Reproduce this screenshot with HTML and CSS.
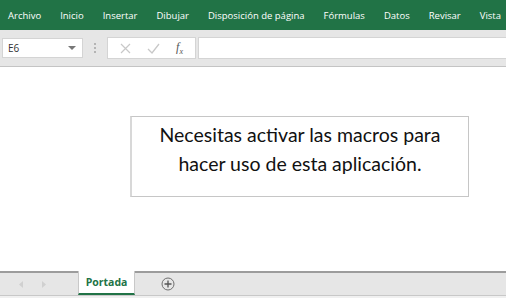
FILE: index.html
```html
<!DOCTYPE html>
<html lang="es">
<head>
  <meta charset="UTF-8">
  <title>Portada</title>
  <link rel="stylesheet" href="styles.css">
</head>
<body>
  <div class="ribbon">
    <span>Archivo</span>
    <span>Inicio</span>
    <span>Insertar</span>
    <span>Dibujar</span>
    <span>Disposición de página</span>
    <span>Fórmulas</span>
    <span>Datos</span>
    <span>Revisar</span>
    <span>Vista</span>
  </div>

  <div class="formula-bar">
    <div class="name-box">
      <span>E6</span>
      <svg width="8" height="5" viewBox="0 0 8 5"><path d="M0 0 L8 0 L4 4 Z" fill="#777"/></svg>
    </div>
    <div class="grip">
      <i></i><i></i><i></i>
    </div>
    <div class="fx-buttons">
      <svg width="11" height="11" viewBox="0 0 11 11"><path d="M1 1 L10 10 M10 1 L1 10" stroke="#c8c8c8" stroke-width="1.2"/></svg>
      <svg width="13" height="11" viewBox="0 0 13 11"><path d="M1 6 L5 10 L12 1" stroke="#c8c8c8" stroke-width="1.3" fill="none"/></svg>
      <span class="fx">f<sub>x</sub></span>
    </div>
    <div class="formula-input"></div>
  </div>

  <div class="sheet">
    <div class="notice">Necesitas activar las macros para hacer uso de esta aplicación.</div>
  </div>

  <div class="tabs">
    <div class="arrows">
      <svg width="5" height="7" viewBox="0 0 5 7"><path d="M4 0 L0 3.5 L4 7 Z" fill="#d0d0d0"/></svg>
      <svg width="5" height="7" viewBox="0 0 5 7"><path d="M1 0 L5 3.5 L1 7 Z" fill="#d0d0d0"/></svg>
    </div>
    <div class="tab active">Portada</div>
    <div class="add-sheet">
      <svg width="14" height="14" viewBox="0 0 14 14"><circle cx="7" cy="7" r="6" fill="none" stroke="#6f6f6f" stroke-width="1"/><path d="M7 3.5 V10.5 M3.5 7 H10.5" stroke="#555" stroke-width="1.3"/></svg>
    </div>
  </div>
  <div class="status"></div>
</body>
</html>
```

FILE: styles.css
```css
body {
  margin: 0;
  width: 506px;
  height: 298px;
  overflow: hidden;
  font-family: "Open Sans", "Liberation Sans", sans-serif;
  background-color: #fff;
  display: flex;
  flex-direction: column;
}
.ribbon {
  height: 30px;
  background-color: #217346;
  color: #fff;
  font-size: 9.5px;
  display: flex;
  align-items: center;
  gap: 19px;
  padding-left: 8px;
  white-space: nowrap;
}
.formula-bar {
  height: 36px;
  background-color: #e6e6e6;
  border-bottom: 1px solid #c4c4c4;
  display: flex;
  align-items: center;
  padding-left: 2px;
}
.name-box {
  width: 81px;
  height: 20px;
  background-color: #fff;
  border: 1px solid #d4d4d4;
  display: flex;
  align-items: center;
  justify-content: space-between;
  padding: 0 6px 0 5px;
  box-sizing: border-box;
  font-size: 10px;
  color: #333;
}
.grip {
  width: 24px;
  display: flex;
  flex-direction: column;
  align-items: center;
  gap: 2px;
}
.grip i {
  width: 2px;
  height: 2px;
  background-color: #b4b4b4;
}
.fx-buttons {
  width: 89px;
  height: 22px;
  box-sizing: border-box;
  background-color: #fff;
  border: 1px solid #d4d4d4;
  display: flex;
  align-items: center;
  justify-content: space-around;
  padding: 0 4px;
}
.fx {
  font-family: "Liberation Serif", serif;
  font-style: italic;
  font-size: 12px;
  color: #555;
}
.fx sub {
  font-size: 8px;
}
.formula-input {
  flex: 1;
  height: 22px;
  box-sizing: border-box;
  background-color: #fff;
  border: 1px solid #d4d4d4;
  border-right: none;
  margin-left: 2px;
}
.sheet {
  flex: 1;
  padding: 49px 0 0 130px;
}
.notice {
  width: 339px;
  height: 81px;
  box-sizing: border-box;
  border: 1px solid #c6c6c6;
  border-left: 2px solid #d8d8d8;
  padding: 3px 10px 0;
  text-align: center;
  font-family: "Lato", sans-serif;
  font-size: 19.5px;
  line-height: 29px;
  color: #111;
}
.tabs {
  height: 22px;
  background-color: #e6e6e6;
  border-top: 2px solid #9c9c9c;
  border-bottom: 1px solid #c8c8c8;
  display: flex;
  align-items: stretch;
}
.arrows {
  width: 78px;
  display: flex;
  align-items: center;
  gap: 17px;
  padding-left: 19px;
  box-sizing: border-box;
}
.tab {
  width: 57px;
  margin-top: -2px;
  background-color: #fff;
  border-left: 1px solid #c8c8c8;
  border-right: 1px solid #c8c8c8;
  color: #217346;
  font-weight: bold;
  font-size: 10.5px;
  display: flex;
  align-items: center;
  justify-content: center;
  box-sizing: border-box;
  border-bottom: 2px solid #217346;
}
.add-sheet {
  padding-left: 26px;
  display: flex;
  align-items: center;
}
.status {
  height: 2px;
  background-color: #f0f0f0;
}
```
